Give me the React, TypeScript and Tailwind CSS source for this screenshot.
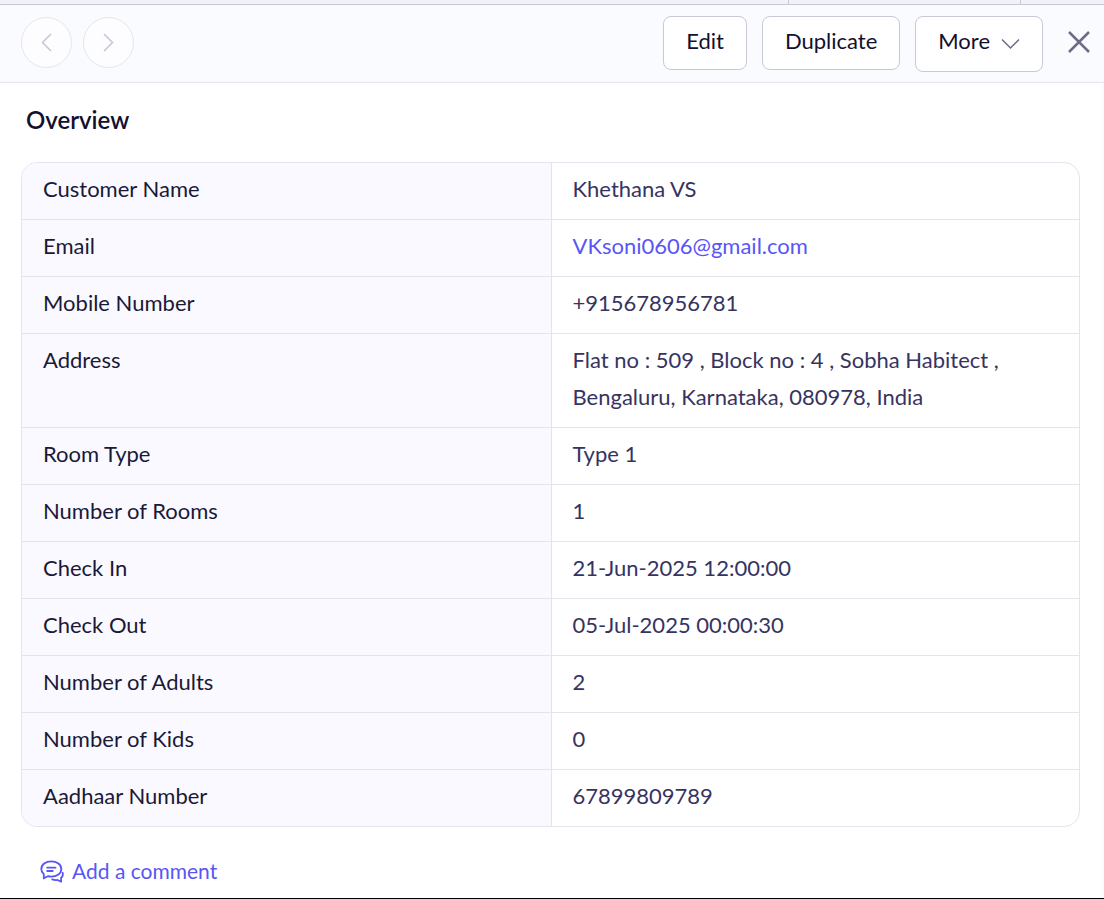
import type { ReactNode } from "react";

type Field = { label: string; value: ReactNode };

const fields: Field[] = [
  { label: "Customer Name", value: "Khethana VS" },
  {
    label: "Email",
    value: (
      <a href="mailto:VKsoni0606@gmail.com" className="text-[#5856f5]">
        VKsoni0606@gmail.com
      </a>
    ),
  },
  { label: "Mobile Number", value: "+915678956781" },
  {
    label: "Address",
    value: (
      <>
        Flat no : 509 , Block no : 4 , Sobha Habitect ,<br />
        Bengaluru, Karnataka, 080978, India
      </>
    ),
  },
  { label: "Room Type", value: "Type 1" },
  { label: "Number of Rooms", value: "1" },
  { label: "Check In", value: "21-Jun-2025 12:00:00" },
  { label: "Check Out", value: "05-Jul-2025 00:00:30" },
  { label: "Number of Adults", value: "2" },
  { label: "Number of Kids", value: "0" },
  { label: "Aadhaar Number", value: "67899809789" },
];

const actionButton =
  "flex items-center rounded-lg border border-[#c9c7d8] bg-white px-[22px] text-[22px] leading-7 text-[#12102e]";

const roundButton =
  "flex size-[51px] items-center justify-center rounded-full border border-[#e6e5ee] bg-[#fdfdff]";

function Header() {
  return (
    <header className="flex items-start justify-between border-b border-[#e4e4ec] bg-[#fafbff] pt-[11px] pr-3 pb-[10px] pl-[21px]">
      <nav aria-label="Records" className="flex gap-[11px] pt-px">
        <button type="button" aria-label="Previous record" className={roundButton}>
          <svg width="12" height="20" viewBox="0 0 12 20" fill="none" stroke="#c6c5d3" strokeWidth="1.5">
            <path d="M10 1 1.500 9.500 10 18" />
          </svg>
        </button>
        <button type="button" aria-label="Next record" className={roundButton}>
          <svg width="12" height="20" viewBox="0 0 12 20" fill="none" stroke="#c6c5d3" strokeWidth="1.5">
            <path d="M1 1l8.500 8.500L1 18" />
          </svg>
        </button>
      </nav>
      <div className="flex items-start gap-[15px]">
        <button type="button" className={`${actionButton} h-[54px] pb-1`}>
          Edit
        </button>
        <button type="button" className={`${actionButton} h-[54px] pb-1`}>
          Duplicate
        </button>
        <button type="button" className={`${actionButton} h-14 gap-[11px] pb-[6px]`}>
          More
          <svg className="mt-[6px]" width="19" height="12" viewBox="0 0 19 12" fill="none" stroke="#6c6b88" strokeWidth="1.5">
            <path d="m1 1.500 8.500 8.500L18 1.500" />
          </svg>
        </button>
        <button type="button" aria-label="Close" className="ml-2 flex h-[52px] items-center">
          <svg width="26" height="24" viewBox="0 0 26 24" fill="none" stroke="#6c6b88" strokeWidth="2.500">
            <path d="m3 2 20 20M23 2 3 22" />
          </svg>
        </button>
      </div>
    </header>
  );
}

function CommentIcon() {
  return (
    <svg
      width="24"
      height="24"
      viewBox="0 0 24 24"
      fill="none"
      stroke="#5856f5"
      strokeWidth="1.800"
      strokeLinecap="round"
      strokeLinejoin="round"
    >
      <path d="M3.800 19.300v-4.100C2.200 13.800 1.300 12 1.300 10 1.300 5.600 5.700 2.300 11.300 2.300s10 3.300 10 7.700-4.400 7.700-10 7.700c-1.200 0-2.400-.1-3.400-.5z" />
      <path d="M7.200 8.700h8.300M7.200 12h5.500" />
      <path d="M22.600 13.800c.7 2 .2 3.500-1.500 4.900v4l-3.600-1.700c-1.900.2-3.700 0-5.300-.6" />
    </svg>
  );
}

export default function App() {
  return (
    <div className="flex min-h-screen flex-col border-b border-black bg-white font-[Lato,sans-serif]">
      <div className="flex h-[5px] border-b border-[#c9c7d8] bg-[#f2f1f6]">
        <div className="flex-1 border-r border-[#c9c7d8]" />
        <div className="w-[232px] border-r border-[#c9c7d8]" />
        <div className="w-[83px]" />
      </div>
      <Header />
      <main className="flex-1 border-r-[3px] border-[#fcfcfc] px-[21px]">
        <h1 className="px-[5px] pt-[21px] text-[24px] leading-8 font-semibold text-[#12102e]">Overview</h1>
        <div className="mt-[26px] overflow-hidden rounded-2xl border border-[#e4e4ec]">
          <table className="w-full table-fixed border-separate border-spacing-0 text-left text-[22px] leading-[37px]">
            <tbody>
              {fields.map((field) => (
                <tr key={field.label}>
                  <th
                    scope="row"
                    className="border-b border-[#e4e4ec] bg-[#faf9ff] px-[21px] pt-[7px] pb-3 align-top font-normal text-[#1b1938] [tr:last-child>&]:border-b-0"
                  >
                    {field.label}
                  </th>
                  <td className="border-b border-l border-[#e4e4ec] px-[21px] pt-[7px] pb-3 align-top text-[#36345f] [tr:last-child>&]:border-b-0">
                    {field.value}
                  </td>
                </tr>
              ))}
            </tbody>
          </table>
        </div>
        <button
          type="button"
          className="mt-7 ml-[19px] flex items-center gap-2 text-[21px] leading-8 text-[#5856f5]"
        >
          <CommentIcon />
          Add a comment
        </button>
      </main>
    </div>
  );
}
